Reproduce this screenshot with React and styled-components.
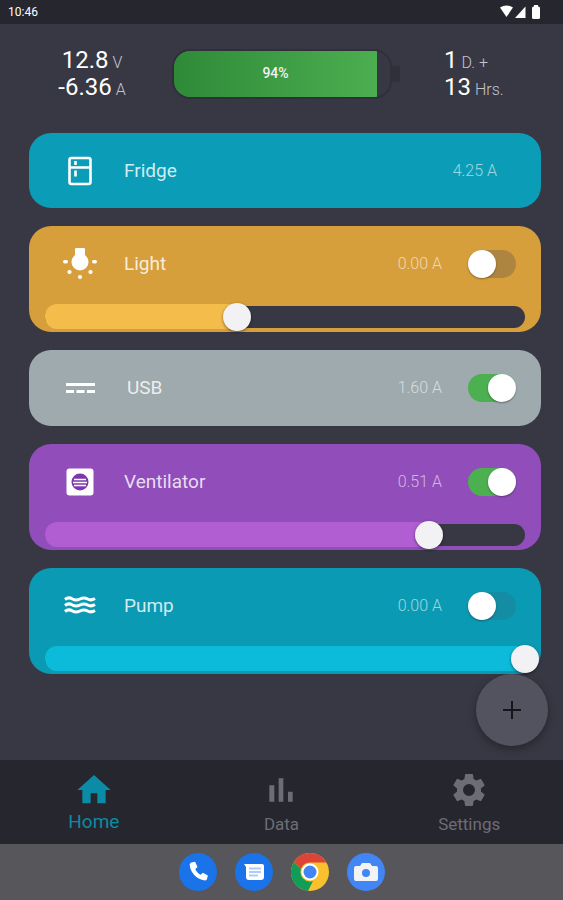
import React from "react";
import styled, { createGlobalStyle } from "styled-components";

const GlobalStyle = createGlobalStyle`
  html, body {
    margin: 0;
    padding: 0;
    background: #383844;
  }
  * {
    box-sizing: border-box;
  }
`;

const FridgeIcon = () => (
  <svg width="26" height="30" viewBox="0 0 26 30" fill="none" stroke="#fff" strokeWidth="2.6">
    <rect x="2.500" y="2" width="21" height="26" rx="2" />
    <path d="M2 11.500H24M8.500 5V9M8.500 14.500V20.500" />
  </svg>
);

const BulbIcon = () => (
  <svg width="34" height="32" viewBox="0 0 34 32" fill="#fff">
    <rect x="12" y="0" width="10" height="8" rx="1" />
    <circle cx="17" cy="14" r="8.500" />
    <rect x="0" y="12" width="5" height="3.400" rx="1.700" />
    <rect x="29" y="12" width="5" height="3.400" rx="1.700" />
    <circle cx="6.500" cy="24" r="2.100" />
    <circle cx="27.500" cy="24" r="2.100" />
    <circle cx="17" cy="29" r="2.100" />
  </svg>
);

const UsbIcon = () => (
  <svg width="29" height="12" viewBox="0 0 29 12" fill="#fff">
    <rect x="0" y="1" width="29" height="3" />
    <rect x="0" y="8" width="8" height="3" />
    <rect x="10.500" y="8" width="8" height="3" />
    <rect x="21" y="8" width="8" height="3" />
  </svg>
);

const FanIcon = () => (
  <svg width="28" height="28" viewBox="0 0 28 28">
    <rect width="27" height="27" x="0.500" y="0.500" rx="3" fill="#fff" />
    <circle cx="14" cy="14" r="8.500" fill="#7e37ac" />
    <path d="M8 11.500H20M7 14.500H21M8 17.500H20" stroke="#fff" strokeWidth="1.400" />
  </svg>
);

const WavesIcon = () => (
  <svg width="32" height="19" viewBox="0 0 32 19" fill="none" stroke="#fff" strokeWidth="3">
    <path d="M1 3.500Q4.500 0.500 8.500 3Q12 5 16 3Q20 1 23.500 3Q27 5 31 2.500" />
    <path d="M1 9.500Q4.500 6.500 8.500 9Q12 11 16 9Q20 7 23.500 9Q27 11 31 8.500" />
    <path d="M1 15.500Q4.500 12.500 8.500 15Q12 17 16 15Q20 13 23.500 15Q27 17 31 14.500" />
  </svg>
);

const HomeIcon = () => (
  <svg width="40" height="40" viewBox="0 0 24 24" fill="#0b8ba6">
    <path d="M10 20v-6h4v6h5v-8h3L12 3 2 12h3v8z" />
  </svg>
);

const BarsIcon = () => (
  <svg width="40" height="40" viewBox="0 0 24 24" fill="#6d6d75">
    <path d="M5 9.200h3V19H5zM10.600 5h2.800v14h-2.800zm5.600 8H19v6h-2.800z" />
  </svg>
);

const GearIcon = () => (
  <svg width="40" height="40" viewBox="0 0 24 24" fill="#6d6d75">
    <path d="M19.140 12.940c.04-.3.06-.61.06-.94 0-.32-.02-.64-.07-.94l2.030-1.580a.49.49 0 0 0 .12-.61l-1.920-3.320a.49.49 0 0 0-.59-.22l-2.390.96c-.5-.38-1.030-.7-1.620-.94l-.36-2.540a.48.48 0 0 0-.48-.41h-3.840c-.24 0-.43.17-.47.41l-.36 2.540c-.59.24-1.130.57-1.620.94l-2.390-.96c-.22-.08-.47 0-.59.22L2.740 8.870c-.12.21-.08.47.12.61l2.030 1.580c-.05.3-.09.63-.09.94s.02.64.07.94l-2.030 1.580a.49.49 0 0 0-.12.61l1.920 3.320c.12.22.37.29.59.22l2.390-.96c.5.38 1.030.7 1.620.94l.36 2.540c.05.24.24.41.48.41h3.840c.24 0 .44-.17.47-.41l.36-2.540c.59-.24 1.130-.56 1.620-.94l2.390.96c.22.08.47 0 .59-.22l1.920-3.320c.12-.22.07-.47-.12-.61l-2.010-1.580zM12 15.600A3.600 3.600 0 1 1 12 8.400a3.600 3.600 0 0 1 0 7.200z" />
  </svg>
);

const PhoneApp = () => (
  <svg width="38" height="38" viewBox="0 0 38 38">
    <circle cx="19" cy="19" r="19" fill="#1a73e8" />
    <path
      fill="#fff"
      d="M12.500 9.500l3.600-.8 2.400 5.200-2.200 2c.9 2.400 2.800 4.600 5.400 5.900l2.200-2 5 2.600-.9 3.700c-.3 1-1.100 1.500-2.100 1.400C17.800 26.300 11.500 20 10.700 12c-.1-1.200.7-2.200 1.800-2.500z"
    />
  </svg>
);

const MessagesApp = () => (
  <svg width="38" height="38" viewBox="0 0 38 38">
    <circle cx="19" cy="19" r="19" fill="#1a73e8" />
    <path fill="#fff" d="M9 11h18a2 2 0 0 1 2 2v11a3 3 0 0 1-3 3H14a3 3 0 0 1-3-3V14z" />
    <path fill="#aecbfa" d="M14 14.500h12v2H14zM14 18h12v2H14zM14 21.500h9v2h-9z" />
  </svg>
);

const ChromeApp = () => (
  <svg width="38" height="38" viewBox="0 0 38 38">
    <circle cx="19" cy="19" r="19" fill="#fbc02d" />
    <path fill="#db4437" d="M19 0a19 19 0 0 1 16.500 9.500H19a9.500 9.500 0 0 0-9 6.500L2.800 9A19 19 0 0 1 19 0z" />
    <path fill="#0f9d58" d="M2.800 9L10 16a9.500 9.500 0 0 0 12 12l-5 9.900A19 19 0 0 1 2.800 9z" />
    <circle cx="19" cy="19" r="8.500" fill="#fff" />
    <circle cx="19" cy="19" r="6.500" fill="#4285f4" />
  </svg>
);

const CameraApp = () => (
  <svg width="38" height="38" viewBox="0 0 38 38">
    <circle cx="19" cy="19" r="19" fill="#4285f4" />
    <path fill="#f1f3f4" d="M15 10h8l2 3h4a2 2 0 0 1 2 2v11a2 2 0 0 1-2 2H9a2 2 0 0 1-2-2V15a2 2 0 0 1 2-2h4z" />
    <circle cx="19" cy="20" r="4" fill="#4285f4" />
  </svg>
);

const devices = [
  { id: 1, name: "Fridge", amps: "4.25 A", color: "#0b9db8", icon: <FridgeIcon /> },
  {
    id: 2,
    name: "Light",
    amps: "0.00 A",
    color: "#d69f3b",
    icon: <BulbIcon />,
    toggle: false,
    trackOff: "rgba(70, 70, 80, 0.28)",
    level: 40,
    fill: "#f4bd4b",
    pad: 4,
  },
  { id: 3, name: "USB", amps: "1.60 A", color: "#9eaaad", icon: <UsbIcon />, toggle: true, nudge: 3, pad: 1 },
  {
    id: 4,
    name: "Ventilator",
    amps: "0.51 A",
    color: "#914dba",
    icon: <FanIcon />,
    toggle: true,
    level: 80,
    fill: "#b05ed2",
    pad: 4,
  },
  {
    id: 5,
    name: "Pump",
    amps: "0.00 A",
    color: "#0b9ab3",
    icon: <WavesIcon />,
    toggle: false,
    trackOff: "rgba(70, 70, 80, 0.16)",
    level: 100,
    fill: "#0cbbd9",
    pad: 4,
  },
];

const Toggle = ({ on, offColor }) => (
  <ToggleTrack $on={on} $off={offColor}>
    <ToggleKnob $on={on} />
  </ToggleTrack>
);

const Slider = ({ level, fill }) => (
  <SliderTrack>
    <SliderFill $color={fill} style={{ width: `${level}%` }}>
      <SliderThumb />
    </SliderFill>
  </SliderTrack>
);

const DeviceCard = ({ device }) => (
  <Card $color={device.color} $pad={device.pad}>
    <CardRow>
      <IconSlot>{device.icon}</IconSlot>
      <CardName $nudge={device.nudge}>{device.name}</CardName>
      <Amps $wide={device.toggle === undefined}>{device.amps}</Amps>
      {device.toggle !== undefined && <Toggle on={device.toggle} offColor={device.trackOff} />}
    </CardRow>
    {device.level !== undefined && <Slider level={device.level} fill={device.fill} />}
  </Card>
);

const App = () => {
  return (
    <Screen>
      <GlobalStyle />
      <StatusBar>
        <Clock>10:46</Clock>
        <svg width="42" height="15" viewBox="0 0 42 15" fill="#fff">
          <path d="M0 2.500Q6.500-1.500 13 2.500L6.500 12z" />
          <path d="M15 13L25.500 1.500V13z" />
          <rect x="32" y="1.500" width="8" height="12.500" rx="1.500" />
          <rect x="34" y="0" width="4" height="2" />
        </svg>
      </StatusBar>
      <Main>
        <Summary>
          <Readings>
            <Reading>
              <Big>12.8</Big> <Unit>V</Unit>
            </Reading>
            <Reading>
              <Big>-6.36</Big> <Unit>A</Unit>
            </Reading>
          </Readings>
          <Battery>
            <BatteryBody>
              <BatteryFill>94%</BatteryFill>
            </BatteryBody>
            <BatteryNub />
          </Battery>
          <Remaining>
            <Reading>
              <Big>1</Big> <Unit>D. +</Unit>
            </Reading>
            <Reading>
              <Big>13</Big> <Unit>Hrs.</Unit>
            </Reading>
          </Remaining>
        </Summary>
        <CardList>
          {devices.map((device) => (
            <DeviceCard key={device.id} device={device} />
          ))}
        </CardList>
        <Fab>
          <svg width="20" height="20" viewBox="0 0 20 20" stroke="#15151b" strokeWidth="2">
            <path d="M10 1V19M1 10H19" />
          </svg>
        </Fab>
      </Main>
      <BottomNav>
        <NavItem>
          <HomeIcon />
          <NavLabel $active>Home</NavLabel>
        </NavItem>
        <NavItem>
          <BarsIcon />
          <NavLabel>Data</NavLabel>
        </NavItem>
        <NavItem>
          <GearIcon />
          <NavLabel>Settings</NavLabel>
        </NavItem>
      </BottomNav>
      <Dock>
        <PhoneApp />
        <MessagesApp />
        <ChromeApp />
        <CameraApp />
      </Dock>
    </Screen>
  );
};

const Screen = styled.div`
  width: 563px;
  height: 900px;
  display: flex;
  flex-direction: column;
  overflow: hidden;
  font-family: Roboto, "Liberation Sans", sans-serif;
  background: #383844;
`;

const StatusBar = styled.div`
  height: 24px;
  flex: none;
  display: flex;
  align-items: center;
  justify-content: space-between;
  padding: 0 21px 0 8px;
  background: #26262f;
`;

const Clock = styled.span`
  font-size: 12px;
  color: #fff;
`;

const Main = styled.div`
  position: relative;
  flex: 1;
  padding: 24px 22px 0 29px;
`;

const Summary = styled.div`
  display: grid;
  grid-template-columns: 143px 228px 1fr;
  height: 50px;
`;

const Readings = styled.div`
  display: flex;
  flex-direction: column;
  align-items: center;
  padding-right: 17px;
  margin-top: -1px;
  gap: 1px;
`;

const Remaining = styled.div`
  display: flex;
  flex-direction: column;
  align-items: flex-start;
  padding-left: 44px;
  margin-top: -1px;
  gap: 1px;
`;

const Reading = styled.div`
  height: 26px;
  line-height: 26px;
  white-space: nowrap;
  color: #fff;
`;

const Big = styled.span`
  font-size: 24px;
`;

const Unit = styled.span`
  font-size: 16px;
  font-weight: 300;
  color: #c4c4cc;
`;

const Battery = styled.div`
  display: flex;
  align-items: center;
`;

const BatteryBody = styled.div`
  width: 220px;
  height: 50px;
  flex: none;
  border: 2px solid #30303b;
  border-radius: 18px;
  overflow: hidden;
  background: #383844;
`;

const BatteryFill = styled.div`
  width: 203px;
  height: 100%;
  display: flex;
  align-items: center;
  justify-content: center;
  padding-bottom: 3px;
  font-size: 14px;
  font-weight: 500;
  color: #f2f2f2;
  background: linear-gradient(90deg, #2f8a38 0%, #4bae50 100%);
`;

const BatteryNub = styled.div`
  width: 8px;
  height: 16px;
  flex: none;
  background: #30303b;
`;

const CardList = styled.div`
  display: flex;
  flex-direction: column;
  gap: 18px;
  margin-top: 35px;
`;

const Card = styled.div`
  width: 512px;
  padding-bottom: ${(p) => p.$pad || 0}px;
  border-radius: 22px;
  background: ${(p) => p.$color};
`;

const CardRow = styled.div`
  height: 75px;
  display: flex;
  align-items: center;
  padding: 0 25px 0 16px;
`;

const IconSlot = styled.div`
  width: 70px;
  flex: none;
  display: flex;
  justify-content: center;
  margin-right: 9px;
`;

const CardName = styled.span`
  flex: 1;
  margin-left: ${(p) => p.$nudge || 0}px;
  font-size: 19px;
  color: rgba(255, 255, 255, 0.82);
`;

const Amps = styled.span`
  margin-right: ${(p) => (p.$wide ? "19px" : "26px")};
  font-size: 16px;
  font-weight: 300;
  color: rgba(255, 255, 255, 0.6);
`;

const ToggleTrack = styled.div`
  width: 48px;
  height: 28px;
  flex: none;
  display: flex;
  justify-content: ${(p) => (p.$on ? "flex-end" : "flex-start")};
  border-radius: 14px;
  background: ${(p) => (p.$on ? "#4caf50" : p.$off)};
`;

const ToggleKnob = styled.div`
  width: 28px;
  height: 28px;
  border-radius: 50%;
  background: #fff;
  box-shadow: 0 1px 2px rgba(0, 0, 0, 0.35);
`;

const SliderTrack = styled.div`
  width: 480px;
  height: 22px;
  margin: 5px 16px 0;
  border-radius: 11px;
  background: #383844;
`;

const SliderFill = styled.div`
  position: relative;
  height: 25px;
  top: -2px;
  border-radius: 12px 0 0 12px;
  background: ${(p) => p.$color};
`;

const SliderThumb = styled.div`
  position: absolute;
  right: -14px;
  top: -1px;
  width: 28px;
  height: 28px;
  border-radius: 50%;
  background: #f2f2f4;
  box-shadow: 0 1px 3px rgba(0, 0, 0, 0.5);
`;

const Fab = styled.div`
  position: absolute;
  right: 15px;
  bottom: 14px;
  width: 72px;
  height: 72px;
  display: flex;
  align-items: center;
  justify-content: center;
  border-radius: 50%;
  background: #53535f;
  box-shadow: 0 3px 8px rgba(0, 0, 0, 0.35);
`;

const BottomNav = styled.div`
  height: 84px;
  flex: none;
  display: grid;
  grid-template-columns: repeat(3, 1fr);
  background: #26262f;
`;

const NavItem = styled.div`
  display: flex;
  flex-direction: column;
  align-items: center;
  padding-top: 10px;
`;

const NavLabel = styled.span`
  margin-top: ${(p) => (p.$active ? "0" : "4px")};
  font-size: ${(p) => (p.$active ? "19px" : "17px")};
  color: ${(p) => (p.$active ? "#0b8ba6" : "#6d6d75")};
`;

const Dock = styled.div`
  height: 56px;
  flex: none;
  display: flex;
  align-items: center;
  justify-content: center;
  gap: 18px;
  background: #57575b;
`;

export default App;
